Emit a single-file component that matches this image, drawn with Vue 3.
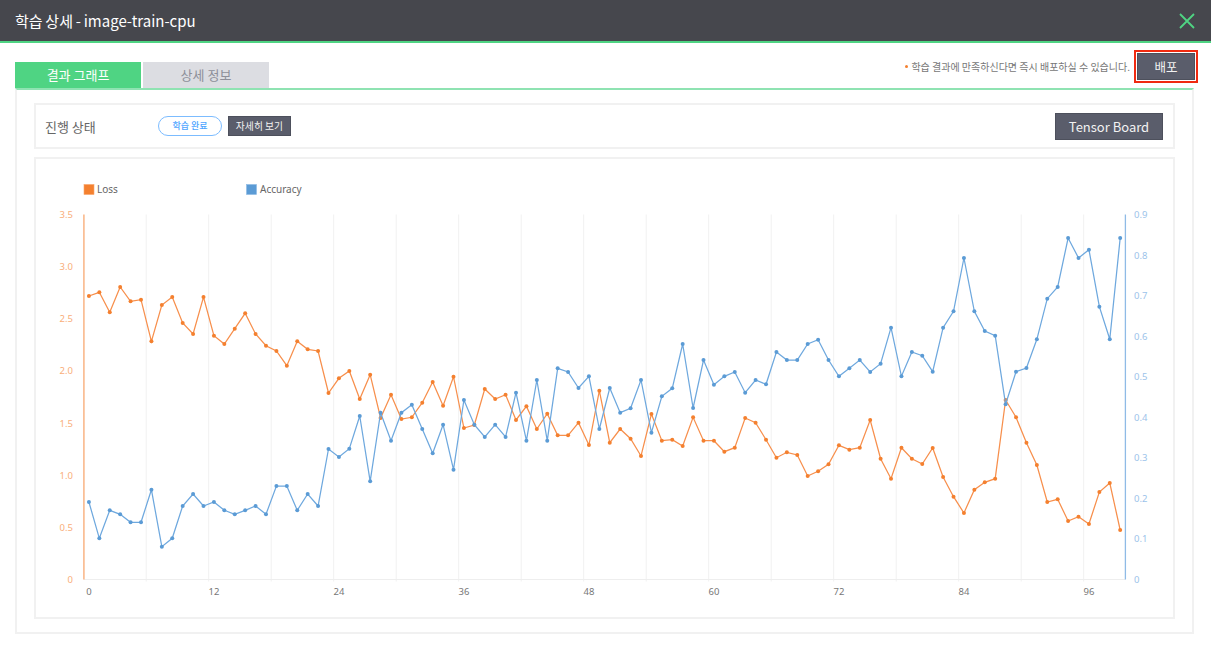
<template>
  <div class="page">
    <header class="top-bar">
      <h1 class="top-title">학습 상세 - image-train-cpu</h1>
      <button class="close-btn" aria-label="닫기">
        <svg width="16" height="16" viewBox="0 0 16 16">
          <path d="M1 1 L15 15 M15 1 L1 15" stroke="#4fd483" stroke-width="1.8" fill="none" />
        </svg>
      </button>
    </header>

    <main class="content">
      <div class="tab-row">
        <div class="tabs">
          <div class="tab active">결과 그래프</div>
          <div class="tab">상세 정보</div>
        </div>
        <div class="deploy">
          <span class="deploy-dot"></span>
          <span class="deploy-text">학습 결과에 만족하신다면 즉시 배포하실 수 있습니다.</span>
          <div class="deploy-frame">
            <button class="dark-btn deploy-btn">배포</button>
          </div>
        </div>
      </div>

      <section class="panel">
        <div class="status-box">
          <span class="status-label">진행 상태</span>
          <span class="status-pill">학습 완료</span>
          <button class="dark-btn detail-btn">자세히 보기</button>
          <button class="dark-btn board-btn">Tensor Board</button>
        </div>

        <div class="chart-box">
          <!-- viewBox는 화면 좌표 기준 -->
          <svg class="chart" width="1137" height="458" viewBox="36 159 1137 458">
            <rect x="84" y="184.5" width="10" height="10" fill="#f4802f" stroke="#f9a56b" stroke-width="0.6" />
            <text x="97" y="193" class="legend">Loss</text>
            <rect x="246.5" y="184.5" width="10" height="10" fill="#5b9bd5" stroke="#8dbae3" stroke-width="0.6" />
            <text x="260" y="193" class="legend">Accuracy</text>

            <line
              v-for="x in gridX"
              :key="x"
              :x1="x"
              :x2="x"
              :y1="plotTop"
              :y2="plotBottom + 2"
              stroke="#f1f1f1"
            />
            <line x1="83.7" x2="1125.4" :y1="plotBottom" :y2="plotBottom" stroke="#eeeeee" />
            <line x1="83.9" x2="83.9" :y1="plotTop" :y2="plotBottom" stroke="#fab98c" stroke-width="1.6" />
            <line x1="1125.4" x2="1125.4" :y1="plotTop" :y2="plotBottom" stroke="#8fbbe6" stroke-width="1.3" />

            <text
              v-for="(t, i) in lossTicks"
              :key="t"
              x="73"
              :y="tickY(i, lossTicks.length) + 3.5"
              class="tick tick-loss"
              text-anchor="end"
            >{{ t }}</text>
            <text
              v-for="(t, i) in accTicks"
              :key="t"
              x="1134"
              :y="tickY(i, accTicks.length) + 3.5"
              class="tick tick-acc"
            >{{ t }}</text>
            <text
              v-for="n in xTicks"
              :key="n"
              :x="pointX(n)"
              y="594.5"
              class="tick tick-x"
              text-anchor="middle"
            >{{ n }}</text>

            <g v-for="s in series" :key="s.name">
              <polyline :points="s.line" fill="none" :stroke="s.stroke" stroke-width="1.25" />
              <circle
                v-for="(y, i) in s.ys"
                :key="i"
                :cx="pointX(i)"
                :cy="y"
                r="2"
                :fill="s.dot"
              />
            </g>
          </svg>
        </div>
      </section>
    </main>
  </div>
</template>

<script setup>
const plotTop = 214.5
const plotBottom = 579.5
const band = 10.417
const plotLeft = 83.7

const lossTicks = ['0', '0.5', '1.0', '1.5', '2.0', '2.5', '3.0', '3.5']
const accTicks = ['0', '0.1', '0.2', '0.3', '0.4', '0.5', '0.6', '0.7', '0.8', '0.9']
const xTicks = [0, 12, 24, 36, 48, 60, 72, 84, 96]
const gridX = Array.from({ length: 16 }, (_, i) => plotLeft + 62.5 * (i + 1))

const lossY = [
  296, 292.3, 312.3, 287, 301.3, 299.7, 341.3, 305, 297, 323,
  334, 297, 335.7, 344, 328.7, 313.3, 334, 345.7, 351, 365.7,
  341.3, 349.3, 351, 393, 378.3, 371, 399, 374.7, 418, 394.7,
  419, 417.3, 402.7, 382, 405.7, 376.7, 428, 425, 389, 399,
  394.7, 420, 406.3, 429, 413.7, 435.3, 435.3, 422.7, 445, 390.7,
  442.7, 429, 438.7, 456, 414, 440.7, 439.7, 446, 417.3, 440.7,
  440.7, 451.7, 447.7, 418, 422.7, 439.7, 457.7, 452.3, 455, 476,
  471.3, 464.3, 445.3, 449.7, 447.7, 420, 458.7, 478.7, 447.7, 458.7,
  464, 448, 477, 496.7, 513, 489.7, 482.3, 478.7, 400, 417.3,
  442.7, 465, 502, 499.3, 521, 516.7, 524, 492, 483, 530
]

const accY = [
  502, 538.3, 510.3, 514.3, 522.3, 522.3, 489.7, 546.7, 538.3, 506,
  494, 506, 502, 510.3, 514.3, 510.3, 506, 514.3, 486, 486,
  510.3, 494, 506, 449, 457, 448.7, 416, 481.3, 412.7, 440.7,
  412.7, 404.7, 429, 453.3, 424.7, 469.7, 400, 424.7, 437, 424.7,
  437, 392.7, 440.7, 380, 440.7, 368.3, 372, 388, 376.3, 429,
  388, 412.7, 408.3, 380, 432.7, 396.3, 388.3, 344, 408, 360,
  384.7, 376.3, 372, 392.7, 380, 384.3, 352, 360, 360, 344,
  339.7, 360, 376.3, 368.3, 360, 372, 363.7, 327.7, 376.3, 352,
  355.7, 371.7, 327.7, 311.3, 258, 311.3, 331, 335.7, 404.3, 371.7,
  368, 339.3, 298.7, 287, 238, 258, 249.7, 306.7, 339.3, 238
]

function pointX(i) {
  return plotLeft + (i + 0.5) * band
}

function tickY(i, count) {
  return plotBottom - (i * (plotBottom - plotTop)) / (count - 1)
}

function toPoints(ys) {
  return ys.map((y, i) => `${pointX(i)},${y}`).join(' ')
}

const series = [
  { name: 'Loss', ys: lossY, line: toPoints(lossY), stroke: '#f78f4c', dot: '#f4802f' },
  { name: 'Accuracy', ys: accY, line: toPoints(accY), stroke: '#6ea8de', dot: '#5b9bd5' }
]
</script>

<style scoped>
.page {
  width: 1211px;
  height: 650px;
  overflow: hidden;
  background: #fff;
  font-family: "Noto Sans CJK KR", "Noto Sans", sans-serif;
  color: #555;
}

.top-bar {
  height: 41px;
  padding: 0 15px;
  display: flex;
  align-items: center;
  justify-content: space-between;
  background: #46474d;
  border-bottom: 2px solid #4fd483;
}

.top-title {
  margin: 0;
  font-size: 15px;
  font-weight: 400;
  word-spacing: -0.6px;
  color: #fff;
}

.close-btn {
  width: 18px;
  height: 18px;
  padding: 1px;
  border: 0;
  background: none;
}

.content {
  padding: 0 17px 0 15px;
}

.tab-row {
  height: 45px;
  display: flex;
  align-items: flex-end;
  justify-content: space-between;
}

.tabs {
  display: flex;
  gap: 2px;
}

.tab {
  width: 126px;
  height: 26px;
  line-height: 26px;
  text-align: center;
  font-size: 13px;
  color: #8d8f99;
  background: #dcdde2;
}

.tab.active {
  color: #fff;
  background: #4fd483;
}

.deploy {
  display: flex;
  align-items: center;
  margin-right: -4px;
  margin-bottom: 5px;
}

.deploy-dot {
  width: 3px;
  height: 3px;
  margin-right: 3px;
  border-radius: 50%;
  background: #f4802f;
}

.deploy-text {
  font-size: 10px;
  color: #777;
}

.deploy-frame {
  margin-left: 4px;
  padding: 1px;
  border: 2px solid #f02a10;
}

.dark-btn {
  display: block;
  padding: 0;
  border: 1px solid #4d505c;
  color: #f2f2f2;
  background: #5a5d6b;
  font-family: inherit;
}

.deploy-btn {
  width: 58px;
  height: 27px;
  font-size: 12.5px;
}

.panel {
  height: 546px;
  padding: 13px 17px;
  box-sizing: border-box;
  border: 2px solid #f1f1f1;
  border-top: 2px solid #8fe3b2;
}

.status-box {
  height: 46px;
  box-sizing: border-box;
  padding: 0 10px 0 9px;
  display: flex;
  align-items: center;
  border: 2px solid #f1f1f1;
}

.status-label {
  width: 113px;
  font-size: 13px;
  color: #666;
}

.status-pill {
  width: 62px;
  height: 18px;
  line-height: 17px;
  border: 1px solid #7cbcff;
  border-radius: 10px;
  text-align: center;
  font-size: 9px;
  font-weight: 500;
  color: #4ea5ff;
}

.detail-btn {
  width: 63px;
  height: 20px;
  margin-left: 6px;
  font-size: 9.8px;
}

.board-btn {
  width: 108px;
  height: 27px;
  margin-left: auto;
  font-size: 13px;
}

.chart-box {
  height: 462px;
  box-sizing: border-box;
  margin-top: 8px;
  border: 2px solid #f1f1f1;
}

.chart {
  display: block;
}

.legend {
  font-family: "Noto Sans", sans-serif;
  font-size: 10px;
  fill: #666;
}

.tick {
  font-family: "Noto Sans", sans-serif;
  font-size: 9.5px;
}

.tick-loss {
  fill: #f9ae7a;
}

.tick-acc {
  fill: #9cc3ea;
}

.tick-x {
  fill: #777;
}
</style>
